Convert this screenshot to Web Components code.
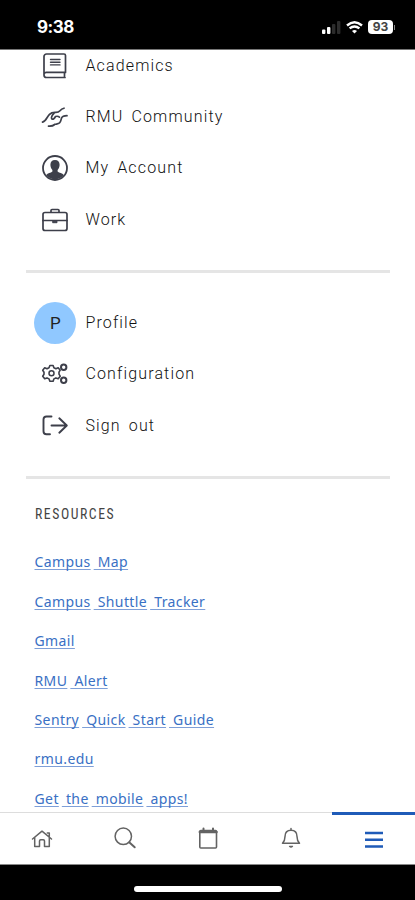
<!DOCTYPE html>
<html lang="en">
<head>
<meta charset="utf-8">
<title>Menu</title>
<style>
html,body{margin:0;padding:0;background:#fff}
</style>
</head>
<body>
<phone-app></phone-app>
<script>
const define = (name, html, setup) => customElements.define(name, class extends HTMLElement {
  constructor() {
    super();
    const t = document.createElement('template');
    t.innerHTML = html;
    this.attachShadow({ mode: 'open' }).append(t.content.cloneNode(true));
  }
  connectedCallback() { if (setup) setup(this, this.shadowRoot); }
});

const svg = (w, h, body) => `<svg width="${w}" height="${h}" viewBox="0 0 ${w} ${h}" fill="none" stroke="currentColor" stroke-width="1.7" stroke-linecap="round" stroke-linejoin="round">${body}</svg>`;
const icons = {
  book: svg(28, 28, '<path d="M24.500 20.500V3.500a1.500 1.500 0 0 0-1.500-1.500H5.500A2.500 2.500 0 0 0 3 4.500V23a2.500 2.500 0 0 0 2.500 2.500H24M3 22.500a2.300 2.300 0 0 1 2.500-2.100H24.500M23.500 20.500v5" /><path d="M9.500 7.500h9.500M9.500 10.200h9.500M9.500 12.900h9.500" stroke-width="1.400"/>'),
  hands: svg(28, 28, '<path d="M1.500 19.200C5 18.500 5.800 14 8.500 11.300c1.700-1.700 3.700-2 6-1.900 2.500.1 3.200-.2 4.500-1.700 1-1.200 2-2 4-2.500"/><path d="M13 10.300c-1.800 1.700-3.300 4.500-2.200 5.500 1.300 1.100 2.700-.3 3.700-2.300 1.600-.5 2.900-.3 3.900.6"/><path d="M26 12.700c-3 0-4.700.6-5.500 2.500-.7 1.800-.4 3.300-2 4.700-1.200 1-2.700 1-4.300 1.400M13.700 21.500c-1.700 1.500-3.200 1.900-6.200 1.600"/>'),
  account: svg(28, 28, '<circle cx="14" cy="14" r="12" stroke-width="1.800"/><path fill="currentColor" stroke="none" d="M14 6c3 0 4.700 2 4.600 5-.1 2.400-1 3.800-2 5v1.500c1.600 1.500 4.700 1.400 6.200 3.500a11.200 11.200 0 0 1-17.600 0c1.500-2.100 4.600-2 6.200-3.500V16c-1-1.200-1.900-2.600-2-5C9.300 8 11 6 14 6z"/>'),
  work: svg(28, 28, '<rect x="2" y="6.500" width="24" height="18" rx="2"/><path d="M10 6V4.500q0-1 1-1h6q1 0 1 1V6M2 14.500h24"/><path d="M12 15.200h4v1.500h-4z" fill="currentColor" stroke-width="1"/>'),
  config: svg(28, 28, '<path d="m8.900 5.500 3.200 0 .8 2.300 2 1 2.300-1 2 2.400-1.200 2v2l1.200 2-2 2.500-2.300-.8-2 1-.8 2.300H8.900l-.9-2.300-2-1-2.300.8-2-2.500 1.300-2v-2l-1.300-2 2-2.400 2.300 1 2-1z" stroke-width="1.600"/><circle cx="10.500" cy="13.300" r="2.500" stroke-width="1.500"/><circle cx="22.700" cy="7.200" r="2.700" stroke-width="2"/><circle cx="22.700" cy="20.200" r="2.700" stroke-width="2"/>'),
  signout: svg(28, 28, '<path d="M10.500 4.500H5.500Q2.500 4.500 2.500 7.500v11.800q0 3 3 3h3.500M10.500 13.500h15M18.300 6.300l7.500 7.200-7.500 7.200" stroke-width="1.900" />'),
  home: svg(28, 28, '<path d="M4.500 14 14 6.200l9.500 7.800M6.700 12.500v9h4.800V16q0-1.200 1.200-1.200h2.600q1.200 0 1.200 1.200v5.500h4.800v-9M19.300 8h2v3.500" stroke-width="1.500"/>'),
  search: svg(28, 28, '<circle cx="12.300" cy="11.300" r="8.200" stroke-width="1.500"/><path d="m18.200 17.300 5.500 5" stroke-width="2"/>'),
  calendar: svg(28, 28, '<rect x="5.800" y="5.600" width="16.700" height="17.400" rx="1" stroke-width="1.600"/><path d="M5.800 7h16.700" stroke-width="2.500"/><path d="M9.500 3.500v3M19 3.500v3" stroke-width="2"/>'),
  bell: svg(28, 28, '<path d="M14 3.500V5M8 11.500q0-6.300 6-6.300t6 6.300c0 3.300.5 4.700 2.500 6.800h-17C7.500 16.200 8 14.800 8 11.500z" stroke-width="1.500"/><path d="M12.500 21.300q1.500 1.500 3 0z" fill="currentColor" stroke-width="1.300"/>'),
  menu: svg(28, 28, '<path d="M5 7h18M5 13.700h18M5 20.500h18" stroke-width="2.500" stroke-linecap="butt"/>')
};

define('status-bar', `<style>
:host{display:flex;box-sizing:border-box;height:50px;background:#000;color:#fff;justify-content:space-between;align-items:center;padding:5px 20px 0 37px;border-bottom:1px solid #777}
.time{font:bold 17px/20px Inter,"Liberation Sans",sans-serif;letter-spacing:-.45px}
.right{display:flex;align-items:center;gap:5px}
.bat{display:flex;align-items:center;gap:1px}
.bat b{width:25px;height:14px;border-radius:4px;background:#fff;color:#444;font:bold 12px/14px Inter,sans-serif;text-align:center}
.bat i{width:1px;height:5px;background:#888}
svg{display:block}
</style><span class="time">9:38</span><div class="right">
<svg width="19" height="13"><g fill="#fff"><rect x="0" y="8.500" width="3.400" height="4.500" rx="1"/><rect x="5" y="6" width="3.400" height="7" rx="1"/></g><g fill="#2c2c2c"><rect x="10" y="3" width="3.400" height="10" rx="1"/><rect x="15" y="0" width="3.400" height="13" rx="1"/></g></svg>
<svg width="17" height="13" viewBox="0 0 17 13" fill="none" stroke="#fff" stroke-width="2.400"><path d="M1 4.500Q8.500-2 16 4.500M3.600 7.400q4.900-4 9.800 0"/><path d="M8.500 12.500 6 10q2.500-2 5 0z" fill="#fff" stroke="none"/></svg>
<div class="bat"><b>93</b><i></i></div></div>`);

define('menu-row', `<style>
:host{display:flex;align-items:center;height:51.400px;padding-left:34.400px;gap:9px;color:#111;font:300 16px/24px Roboto,sans-serif}
.ic{width:42px;height:42px;display:flex;align-items:center;justify-content:center;color:#3d3f4a}
:host([avatar]) .ic{border-radius:50%;background:#90c8ff;color:#222;font-size:17px;font-weight:400}
.t{white-space:nowrap;letter-spacing:1.150px;word-spacing:3px}
</style><span class="ic"></span><span class="t"><slot></slot></span>`, (el, root) => {
  root.querySelector('.ic').innerHTML = el.getAttribute('avatar') || icons[el.getAttribute('icon')];
});

define('menu-divider', `<style>:host{display:block;height:3px;margin:0 25px 0 26px;background:#e5e5e5}</style>`);

define('resource-link', `<style>
:host{display:block;height:39.400px;padding-left:34.500px;font:400 14px/39.400px "Noto Sans","Open Sans",sans-serif;color:#3970c4;white-space:pre}
a{letter-spacing:.4px}
span{text-decoration:underline;text-decoration-color:#7e9fd8;text-decoration-thickness:1px;text-underline-offset:2px;text-decoration-skip-ink:none}
span+span{margin-left:3px}
</style><a></a>`, (el, root) => {
  const a = root.querySelector('a');
  el.getAttribute('label').split(' ').forEach((w, i) => {
    const s = document.createElement('span');
    s.textContent = (i ? ' ' : '') + w;
    a.append(s);
  });
});

define('nav-tab', `<style>
:host{display:flex;flex:1;align-items:center;justify-content:center;color:#636363;border-top:1px solid #ddd;box-sizing:border-box}
:host([active]){color:#1f5bb8;border-top:3px solid #1f5bb8}
</style>`, (el, root) => {
  root.append(document.createRange().createContextualFragment(icons[el.getAttribute('icon')]));
});

define('tab-bar', `<style>:host{display:flex;height:53px;background:#fff;border-bottom:1px solid #888;box-sizing:border-box}</style><slot></slot>`);

define('home-indicator', `<style>
:host{display:flex;height:35px;background:#000;justify-content:center;align-items:flex-end;box-sizing:border-box}
i{display:block;width:148px;height:6px;border-radius:3px;background:#fff;margin-bottom:8px}
</style><i></i>`);

define('phone-app', `<style>
:host{display:flex;flex-direction:column;width:415px;height:900px;overflow:hidden;background:#fff}
main{height:762px;flex:none;overflow:hidden}
.scroll{margin-top:-10px}
menu-divider{margin-top:24px;margin-bottom:24.500px}
.second{margin-top:24.500px;margin-bottom:23px}
h2{margin:0 0 16.600px 34.500px;padding-top:0;height:24px;font:400 14px/24px "Roboto Condensed",Roboto,sans-serif;color:#444;letter-spacing:1.600px}
h2 span{display:inline-block;transform:scaleX(.98);transform-origin:0 50%}
</style>
<status-bar></status-bar>
<main><div class="scroll">
<menu-row icon="book">Academics</menu-row>
<menu-row icon="hands">RMU Community</menu-row>
<menu-row icon="account">My Account</menu-row>
<menu-row icon="work">Work</menu-row>
<menu-divider></menu-divider>
<menu-row avatar="P">Profile</menu-row>
<menu-row icon="config">Configuration</menu-row>
<menu-row icon="signout">Sign out</menu-row>
<menu-divider class="second"></menu-divider>
<h2><span>RESOURCES</span></h2>
<resource-link label="Campus Map"></resource-link>
<resource-link label="Campus Shuttle Tracker"></resource-link>
<resource-link label="Gmail"></resource-link>
<resource-link label="RMU Alert"></resource-link>
<resource-link label="Sentry Quick Start Guide"></resource-link>
<resource-link label="rmu.edu"></resource-link>
<resource-link label="Get the mobile apps!"></resource-link>
</div></main>
<tab-bar><nav-tab icon="home"></nav-tab><nav-tab icon="search"></nav-tab><nav-tab icon="calendar"></nav-tab><nav-tab icon="bell"></nav-tab><nav-tab icon="menu" active></nav-tab></tab-bar>
<home-indicator></home-indicator>`);
</script>
</body>
</html>
